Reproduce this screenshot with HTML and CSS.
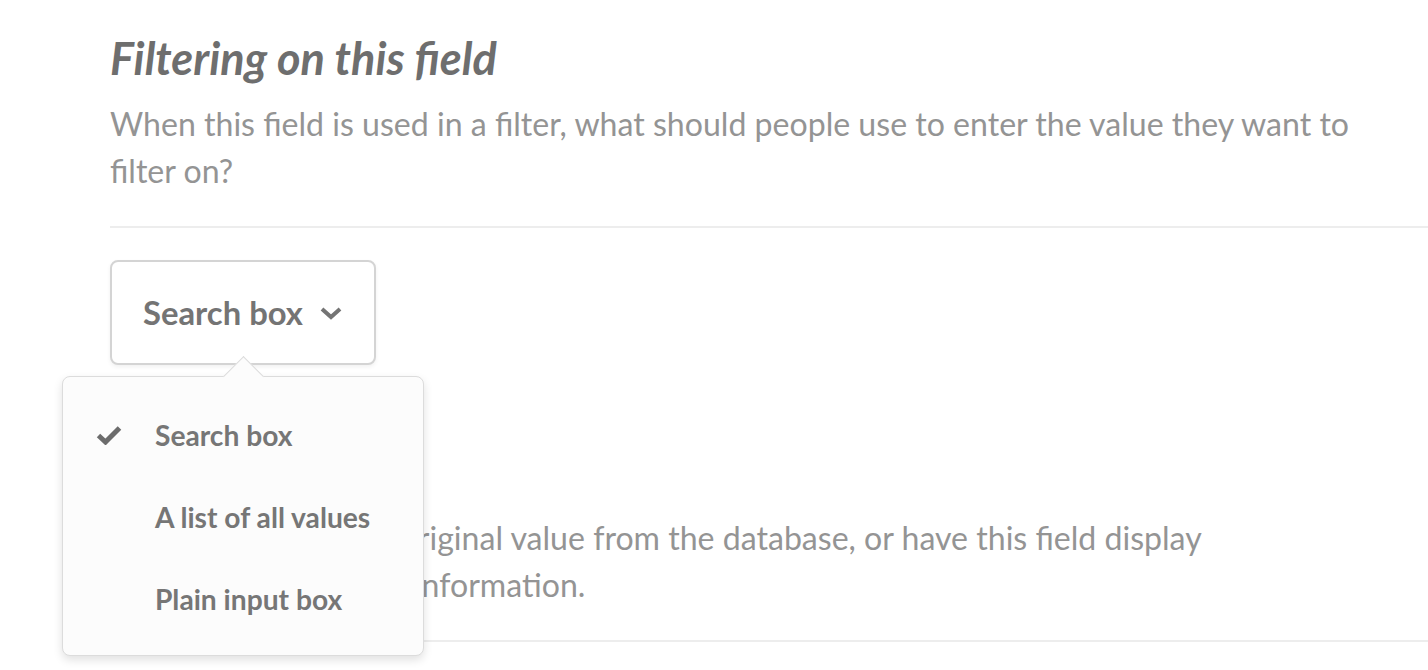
FILE: index.html
```html
<!DOCTYPE html>
<html lang="en">
<head>
    <meta charset="UTF-8">
    <meta name="viewport" content="width=device-width, initial-scale=1.0">
    <title>Field settings</title>
    <link rel="stylesheet" href="styles.css">
</head>
<body>
    <div class="page">
        <section class="section section--bordered">
            <h2 class="section-title">Filtering on this field</h2>
            <p class="section-desc">When this field is used in a filter, what should people use to enter the value they want to filter on?</p>
        </section>

        <section class="section section--select">
            <div class="select-wrap">
                <button class="select">
                    <span>Search box</span>
                    <svg class="chevron" viewBox="0 0 24 14">
                        <path d="M3 3l9 8 9-8"/>
                    </svg>
                </button>

                <div class="popover">
                    <div class="option selected">
                        <svg class="check" viewBox="0 0 26 20">
                            <path d="M2.5 10.5l7 6.5 14-14"/>
                        </svg>
                        <span>Search box</span>
                    </div>
                    <div class="option">
                        <span class="check"></span>
                        <span>A list of all values</span>
                    </div>
                    <div class="option">
                        <span class="check"></span>
                        <span>Plain input box</span>
                    </div>
                </div>
            </div>
        </section>

        <section class="section section--bordered">
            <h2 class="section-title">Display values</h2>
            <p class="section-desc section-desc--narrow">Choose to show the original value from the database, or have this field display associated or custom information.</p>
        </section>
    </div>
</body>
</html>
```

FILE: styles.css
```css
* {
    margin: 0;
    padding: 0;
    box-sizing: border-box;
}

body {
    font-family: Lato, "Open Sans", Arial, sans-serif;
    background: white;
    min-height: 670px;
}

.page {
    padding: 33px 0 0 110px;
    min-height: 670px;
}

.section {
    padding-bottom: 32px;
}

.section--bordered {
    border-bottom: 2px solid #ededed;
}

.section--select {
    padding-top: 32px;
    padding-bottom: 82px;
}

.section-title {
    font-size: 45px;
    font-style: italic;
    font-weight: 700;
    line-height: 50px;
    color: #6e6e6e;
    margin-bottom: 17px;
}

.section-desc {
    font-size: 32.1px;
    line-height: 47px;
    color: #949494;
    max-width: 1260px;
}

.section-desc--narrow {
    max-width: 1150px;
}

.select-wrap {
    position: relative;
    display: inline-block;
}

.select {
    display: flex;
    align-items: center;
    gap: 16px;
    height: 105px;
    padding: 0 31px;
    background: white;
    border: 2px solid #d4d4d4;
    border-radius: 8px;
    box-shadow: 0 2px 4px rgba(0,0,0,0.06);
    font-family: inherit;
    font-size: 32.8px;
    font-weight: 700;
    color: #747474;
}

.chevron {
    width: 24px;
    height: 14px;
    fill: none;
    stroke: #747474;
    stroke-width: 4;
}

.popover {
    position: absolute;
    top: 116px;
    left: 50%;
    transform: translateX(-50%);
    width: 362px;
    padding: 17px 0 15px;
    background: #fcfcfc;
    border: 1px solid #dcdcdc;
    border-radius: 8px;
    box-shadow: 0 4px 10px rgba(0,0,0,0.12);
    z-index: 10;
}

.popover::before {
    content: "";
    position: absolute;
    top: -15px;
    left: 50%;
    width: 28px;
    height: 28px;
    margin-left: -14px;
    background: #fcfcfc;
    border-top: 1px solid #dcdcdc;
    border-left: 1px solid #dcdcdc;
    transform: rotate(45deg);
}

.option {
    display: flex;
    align-items: center;
    gap: 33px;
    height: 82px;
    padding-left: 33px;
    font-size: 28.2px;
    font-weight: 700;
    color: #767676;
}

.check {
    width: 26px;
    height: 20px;
    flex-shrink: 0;
    fill: none;
    stroke: #6c6c6c;
    stroke-width: 5;
}
```
